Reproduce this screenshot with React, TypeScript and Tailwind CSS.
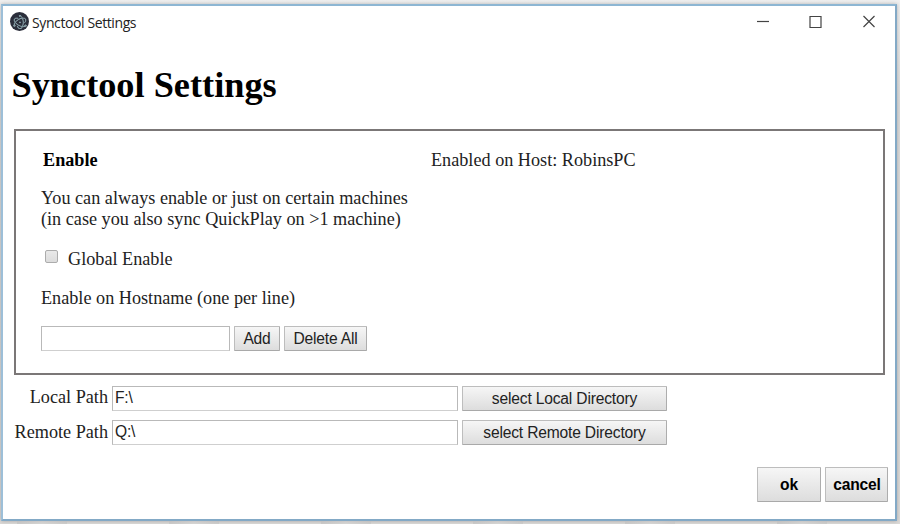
import React from 'react';
import { SiElectron } from 'react-icons/si';

const buttonBase =
  'shrink-0 flex items-center justify-center border border-[#bdbdbd] border-b-[#a9a9a9] border-r-[#adadad] rounded-[1px] bg-linear-to-b from-[#f6f6f6] to-[#dddddd] whitespace-nowrap';
const buttonFont =
  "font-['Liberation_Sans',Arial,sans-serif] text-[15.6px] tracking-[-0.17px] leading-[20px] text-[#222]";
const field =
  "shrink-0 border border-[#b9b9b9] border-b-[#cfcfcf] bg-white pl-[2px] pb-px outline-none font-['Liberation_Sans',Arial,sans-serif] text-[15.6px] tracking-[-0.17px] leading-[20px] text-[#222]";

function AppIcon() {
  return (
    <span className="flex h-[19px] w-[19px] shrink-0 items-center justify-center rounded-full bg-[#2b2e3b] text-[#a5c4ca]">
      <SiElectron className="block h-[14px] w-[14px] stroke-[#a5c4ca] stroke-[0.6px]" />
    </span>
  );
}

function TitleBar() {
  return (
    <header className="flex h-[34px] shrink-0 items-start pl-[7px] pt-[6px]">
      <AppIcon />
      <span className="ml-[3px] mt-px whitespace-nowrap font-['Open_Sans','Noto_Sans',sans-serif] text-[14px] leading-[19px] tracking-[-0.4px] text-[#222]">
        Synctool Settings
      </span>
      <div className="ml-auto mr-[19px] mt-[2px] flex gap-[39px] text-[#444]">
        <svg className="block h-[14px] w-[14px]" viewBox="0 0 14 14" fill="none" stroke="currentColor">
          <path d="M1 7.500h12" strokeWidth="1.200" />
        </svg>
        <svg className="block h-[14px] w-[14px]" viewBox="0 0 14 14" fill="none" stroke="currentColor">
          <path d="M1 2.500h11v11h-11z" strokeWidth="1.200" />
        </svg>
        <svg className="block h-[14px] w-[14px]" viewBox="0 0 14 14" fill="none" stroke="currentColor">
          <path d="M1.500 2l11 11M12.500 2l-11 11" strokeWidth="1.200" />
        </svg>
      </div>
    </header>
  );
}

function EnablePanel() {
  return (
    <section className="ml-[11px] flex h-[246px] w-[871px] shrink-0 border-2 border-[#7b7777] pt-[19px] leading-[20px]">
      <div className="w-[415px] shrink-0 whitespace-nowrap pl-[25px]">
        <h2 className="pl-[2px] font-bold text-black">Enable</h2>
        <p className="mt-[18px] leading-[21px]">
          You can always enable or just on certain machines
          <br />
          (in case you also sync QuickPlay on &gt;1 machine)
        </p>
        <label className="mt-[19px] flex h-[20px] items-start pl-[4px]">
          <span className="mt-px h-[13px] w-[13px] shrink-0 rounded-[2px] border border-[#acacac] bg-linear-to-b from-[#e9e9e9] to-[#dcdcdc]" />
          <span className="ml-[10px]">Global Enable</span>
        </label>
        <p className="mt-[19px]">Enable on Hostname (one per line)</p>
        <div className="mt-[18px] flex gap-[4px]">
          <input className={`${field} h-[25px] w-[189px]`} />
          <button className={`${buttonBase} ${buttonFont} h-[25px] w-[46px]`}>Add</button>
          <button className={`${buttonBase} ${buttonFont} h-[25px] w-[83px]`}>Delete All</button>
        </div>
      </div>
      <p className="whitespace-nowrap">Enabled on Host: RobinsPC</p>
    </section>
  );
}

function PathRow({ label, value, action, labelLeading }: { label: string; value: string; action: string; labelLeading: string }) {
  return (
    <div className="flex h-[25px] items-start">
      <label className={`w-[105px] shrink-0 whitespace-nowrap text-right ${labelLeading}`}>{label}</label>
      <input className={`${field} ml-[4px] h-[25px] w-[346px]`} defaultValue={value} />
      <button className={`${buttonBase} ${buttonFont} ml-[4px] h-[25px] w-[205px]`}>{action}</button>
    </div>
  );
}

// Faint desktop pattern visible under the window's bottom edge
function DesktopEdge() {
  return (
    <div className="flex h-[3px] gap-[102px] pl-[16px]">
      {[0, 1, 2, 3, 4, 5].map((i) => (
        <span key={i} className="h-[3px] w-[50px] shrink-0 bg-linear-to-r from-[#bfbfbf]/60 via-[#d4d4d4]/40 to-[#bfbfbf]/50" />
      ))}
    </div>
  );
}

export default function App() {
  return (
    <div className="h-[524px] w-[900px] overflow-hidden bg-[#dddcdb] bg-linear-to-b from-[#f0f0f0] via-[#dcdcdc] via-20% to-[#dcdad8] pl-px pt-[4px]">
      <main className="flex h-[517px] w-[896px] flex-col border-2 border-[#83a9c6] border-t-[#8db6d3] border-l-[#9dbfd8] bg-white font-['Liberation_Serif','Times_New_Roman',serif] text-[18.200px] text-[#222] shadow-[0_0_4px_rgba(0,0,0,0.25)]">
        <TitleBar />
        <h1 className="ml-[8.5px] mt-[23px] h-[66px] shrink-0 whitespace-nowrap text-[36.300px] font-bold leading-[44px] text-black">
          Synctool Settings
        </h1>
        <EnablePanel />
        <div className="mt-[11px] flex flex-col gap-[9px]">
          <PathRow label="Local Path" value="F:\" action="select Local Directory" labelLeading="leading-[23px]" />
          <PathRow label="Remote Path" value="Q:\" action="select Remote Directory" labelLeading="leading-[25px]" />
        </div>
        <footer className="mr-[7px] mt-[22px] flex justify-end gap-[4px] font-['Liberation_Sans',Arial,sans-serif] text-[15.600px] tracking-[-0.17px] font-bold text-black">
          <button className={`${buttonBase} h-[35px] w-[64px]`}>ok</button>
          <button className={`${buttonBase} h-[35px] w-[63px] pl-px`}>cancel</button>
        </footer>
      </main>
      <DesktopEdge />
    </div>
  );
}
